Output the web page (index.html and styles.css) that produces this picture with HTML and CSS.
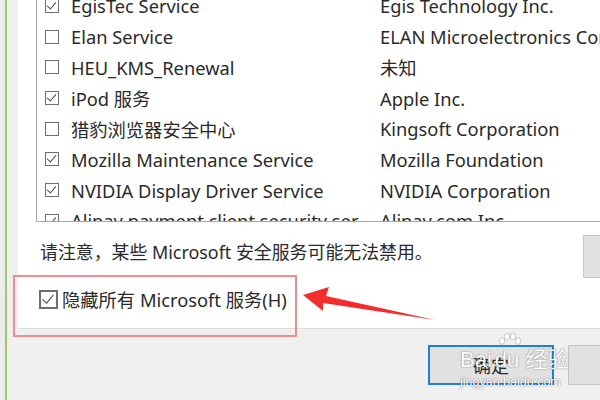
FILE: index.html
```html
<!DOCTYPE html>
<html>
<head>
<meta charset="utf-8">
<link rel="stylesheet" href="styles.css">
</head>
<body>
<div class="screen">
  <div class="side">
    <div class="side-a"></div>
    <div class="side-line"></div>
    <div class="side-b"></div>
  </div>
  <div class="main">
    <div class="panel">
      <div class="list">
        <div class="row"><span class="cb on"></span><span class="c1">EgisTec Service</span><span class="c2">Egis Technology Inc.</span></div>
        <div class="row"><span class="cb"></span><span class="c1">Elan Service</span><span class="c2">ELAN Microelectronics Corp.</span></div>
        <div class="row"><span class="cb"></span><span class="c1">HEU_KMS_Renewal</span><span class="c2">未知</span></div>
        <div class="row"><span class="cb on"></span><span class="c1">iPod 服务</span><span class="c2">Apple Inc.</span></div>
        <div class="row"><span class="cb"></span><span class="c1">猎豹浏览器安全中心</span><span class="c2">Kingsoft Corporation</span></div>
        <div class="row"><span class="cb on"></span><span class="c1">Mozilla Maintenance Service</span><span class="c2">Mozilla Foundation</span></div>
        <div class="row"><span class="cb on"></span><span class="c1">NVIDIA Display Driver Service</span><span class="c2">NVIDIA Corporation</span></div>
        <div class="row"><span class="cb on"></span><span class="c1">Alipay payment client security ser</span><span class="c2">Alipay.com Inc.</span></div>
      </div>
      <div class="note-row">
        <div class="note">请注意，某些 Microsoft 安全服务可能无法禁用。</div>
        <div class="side-btn"></div>
      </div>
      <div class="hide-row"><span class="cb on big"></span><span class="hide-text">隐藏所有 Microsoft 服务(H)</span></div>
    </div>
    <div class="footer">
      <div class="btn primary">确定</div>
      <div class="btn"></div>
    </div>
  </div>
</div>
<div class="highlight"></div>
<svg class="arrow" width="140" height="40" viewBox="300 285 140 40">
  <polygon points="303,295 329,287 326,296 435,320 323,303 323,311" fill="#f42c2c"/>
</svg>
<div class="watermark">
  <svg class="paw" width="26" height="16" viewBox="0 0 26 16">
    <g fill="#fff" stroke="rgba(0,0,0,0.25)" stroke-width="0.8">
      <ellipse cx="5" cy="8" rx="2.6" ry="3.4"/>
      <ellipse cx="10" cy="3.5" rx="2.6" ry="3.4"/>
      <ellipse cx="16" cy="3.5" rx="2.6" ry="3.4"/>
      <ellipse cx="21" cy="8" rx="2.6" ry="3.4"/>
    </g>
  </svg>
  <div class="wm-main">Bai<span class="wm-du">du</span> 经验</div>
  <div class="wm-url">jingyan.baidu.com</div>
</div>
</body>
</html>
```
FILE: styles.css
```css
html, body {
  margin: 0;
  padding: 0;
}
body {
  width: 600px;
  height: 400px;
  overflow: hidden;
  background: #f0f0f0;
  font-family: "Noto Sans", "Noto Sans CJK SC", sans-serif;
  color: #2a2a2a;
  position: relative;
}
.screen {
  display: flex;
  width: 600px;
  height: 400px;
}
.side {
  display: flex;
  flex: none;
}
.side-a {
  width: 5px;
  background: #ececec;
}
.side-line {
  width: 2px;
  background: #9fc56f;
}
.side-b {
  width: 11px;
  background: #f0f0f0;
}
.main {
  flex: 1;
  display: flex;
  flex-direction: column;
  min-width: 0;
}
.panel {
  height: 329px;
  background: #fff;
  border-bottom: 1px solid #dcdcdc;
  box-sizing: border-box;
  overflow: hidden;
  display: flex;
  flex-direction: column;
}
.list {
  margin: -11px 0 0 18px;
  height: 233px;
  box-sizing: border-box;
  border: 1px solid #a8a8a8;
  border-right: none;
  overflow: hidden;
  padding-top: 0.65px;
  flex: none;
}
.row {
  height: 30.7px;
  display: flex;
  align-items: center;
  font-size: 18.3px;
  white-space: nowrap;
}
.cb {
  width: 12px;
  height: 12px;
  border: 1.5px solid #6e6e6e;
  margin-left: 8px;
  flex: none;
  position: relative;
  background: #fff;
}
.cb.on::after {
  content: "";
  position: absolute;
  left: 3px;
  top: 0px;
  width: 4px;
  height: 8px;
  border-right: 1.6px solid #4a4a4a;
  border-bottom: 1.6px solid #4a4a4a;
  transform: rotate(40deg);
}
.c1 {
  margin-left: 12px;
  margin-right: 20px;
  width: 289px;
  flex: none;
  overflow: hidden;
}
.c2 {
  flex: none;
}
.note-row {
  display: flex;
  align-items: flex-start;
  height: 55px;
  flex: none;
}
.note {
  margin: 16px 0 0 22px;
  font-size: 17.9px;
  white-space: nowrap;
}
.side-btn {
  margin: 13px 0 0 auto;
  width: 16px;
  height: 41px;
  background: #e1e1e1;
  border: 1px solid #c8c8c8;
  border-right: none;
}
.hide-row {
  display: flex;
  align-items: center;
  margin: 10px 0 0 21px;
  height: 24px;
}
.cb.big {
  width: 15px;
  height: 15px;
  margin-left: 0;
  border-width: 2px;
}
.cb.big.on::after {
  left: 4px;
  top: 0px;
  width: 5px;
  height: 10px;
}
.hide-text {
  margin-left: 4px;
  font-size: 18.3px;
  white-space: nowrap;
}
.footer {
  flex: 1;
  display: flex;
  align-items: flex-start;
  justify-content: flex-end;
  padding-top: 16px;
  gap: 14px;
}
.btn {
  width: 32px;
  height: 40px;
  background: #e1e1e1;
  border: 1px solid #c4c4c4;
  border-right: none;
  box-sizing: border-box;
}
.btn.primary {
  width: 126px;
  border: 2px solid #1f7fd9;
  display: flex;
  align-items: center;
  justify-content: center;
  font-size: 18px;
  color: #2a2a2a;
}
.highlight {
  position: absolute;
  left: 13px;
  top: 275px;
  width: 284px;
  height: 62px;
  box-sizing: border-box;
  border: 2px solid #f28b8b;
}
.arrow {
  position: absolute;
  left: 300px;
  top: 285px;
}
.watermark {
  position: absolute;
  left: 460px;
  top: 333px;
  width: 140px;
  white-space: nowrap;
  color: #ffffff;
  text-shadow: 0 0 1px rgba(0,0,0,0.45), 0 0 2px rgba(0,0,0,0.25);
}
.paw {
  position: absolute;
  left: 37px;
  top: 0;
}
.wm-main {
  margin-top: 14px;
  font-family: "Liberation Sans", "Noto Sans CJK SC", sans-serif;
  font-size: 22px;
  line-height: 26px;
}
.wm-du {
  margin-left: 3px;
}
.wm-url {
  font-family: "Liberation Sans", sans-serif;
  font-size: 12.5px;
  line-height: 14px;
  margin-top: 2px;
}
```
